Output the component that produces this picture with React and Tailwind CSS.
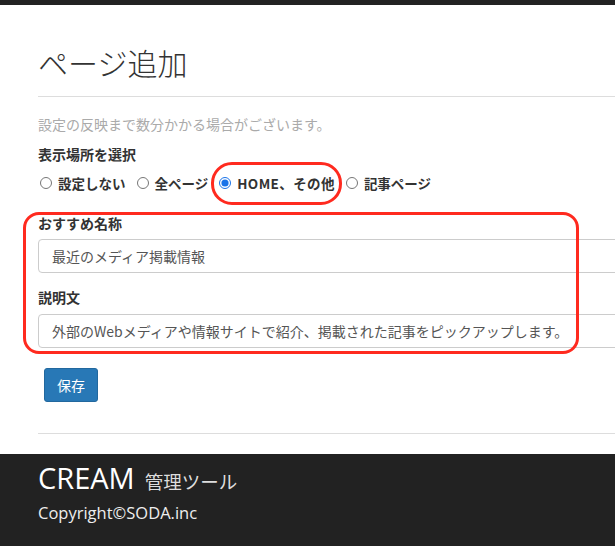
import React, { useState } from 'react';

const options = ['設定しない', '全ページ', 'HOME、その他', '記事ページ'];

const App = () => {
  const [selected, setSelected] = useState('HOME、その他');

  return (
    <div
      className="relative w-full overflow-hidden bg-white text-[#333]"
      style={{ fontFamily: '"Noto Sans CJK JP", "Noto Sans", sans-serif' }}
    >
      {/* ヘッダーバー */}
      <div className="h-[5px] bg-[#222]" />

      <div className="w-[720px] pl-[38px]">
        <h1 className="mt-[37px] text-[30px] leading-[40px] font-light text-[#333]">ページ追加</h1>
        <hr className="mt-[14px] border-t border-[#ddd]" />

        <p className="mt-[18px] text-[14px] leading-[18px] text-[#aaa]">
          設定の反映まで数分かかる場合がございます。
        </p>

        <p className="mt-[12px] text-[14px] leading-[18px] font-bold">表示場所を選択</p>
        <div className="mt-[11px] flex items-center gap-[9px]">
          {options.map((opt) => (
            <label key={opt} className="flex items-center gap-[6px] text-[13.5px] leading-[18px] font-bold">
              <input
                type="radio"
                name="place"
                className="ml-[2px] h-[12px] w-[12px] accent-[#1a73e8]"
                checked={selected === opt}
                onChange={() => setSelected(opt)}
              />
              <span className={opt.startsWith('HOME') ? 'tracking-[0.4px]' : ''}>{opt}</span>
            </label>
          ))}
        </div>

        <p className="mt-[22px] text-[14px] leading-[18px] font-bold">おすすめ名称</p>
        <div className="mt-[7px] h-[34px] rounded-[4px] border border-[#ccc] pl-[13px] text-[14px] leading-[32px] text-[#555]">
          最近のメディア掲載情報
        </div>

        <p className="mt-[15px] text-[14px] leading-[18px] font-bold">説明文</p>
        <div className="mt-[8px] h-[34px] rounded-[4px] border border-[#ccc] pl-[13px] text-[14px] leading-[32px] text-[#555]">
          外部のWebメディアや情報サイトで紹介、掲載された記事をピックアップします。
        </div>

        <button className="ml-[6px] mt-[20px] h-[34px] w-[54px] rounded-[3px] border border-[#22689e] bg-[#2878b6] text-[14px] text-white">
          保存
        </button>

        <hr className="mt-[31px] border-t border-[#ddd]" />
      </div>

      {/* フッター */}
      <footer className="mt-[20px] h-[92px] bg-[#222] pl-[38px] pt-[6px] text-white">
        <div className="flex items-baseline gap-[10px]" style={{ fontFamily: '"Open Sans", "Noto Sans CJK JP", sans-serif' }}>
          <span className="text-[29px] leading-[36px]">CREAM</span>
          <span className="text-[18.5px] text-[#ddd]">管理ツール</span>
        </div>
        <p className="mt-[6px] text-[16.5px] leading-[22px] text-[#eee]" style={{ fontFamily: '"Open Sans", sans-serif' }}>
          Copyright©SODA.inc
        </p>
      </footer>
      <div className="h-[10px] bg-white" />

      {/* 注釈（赤枠） */}
      <div className="pointer-events-none absolute left-[211px] top-[162px] h-[43px] w-[131px] rounded-[21px] border-[3px] border-[#ff2a1f]" />
      <div className="pointer-events-none absolute left-[23px] top-[212px] h-[142px] w-[556px] rounded-[16px] border-[3px] border-[#ff2a1f]" />
    </div>
  );
};

export default App;
